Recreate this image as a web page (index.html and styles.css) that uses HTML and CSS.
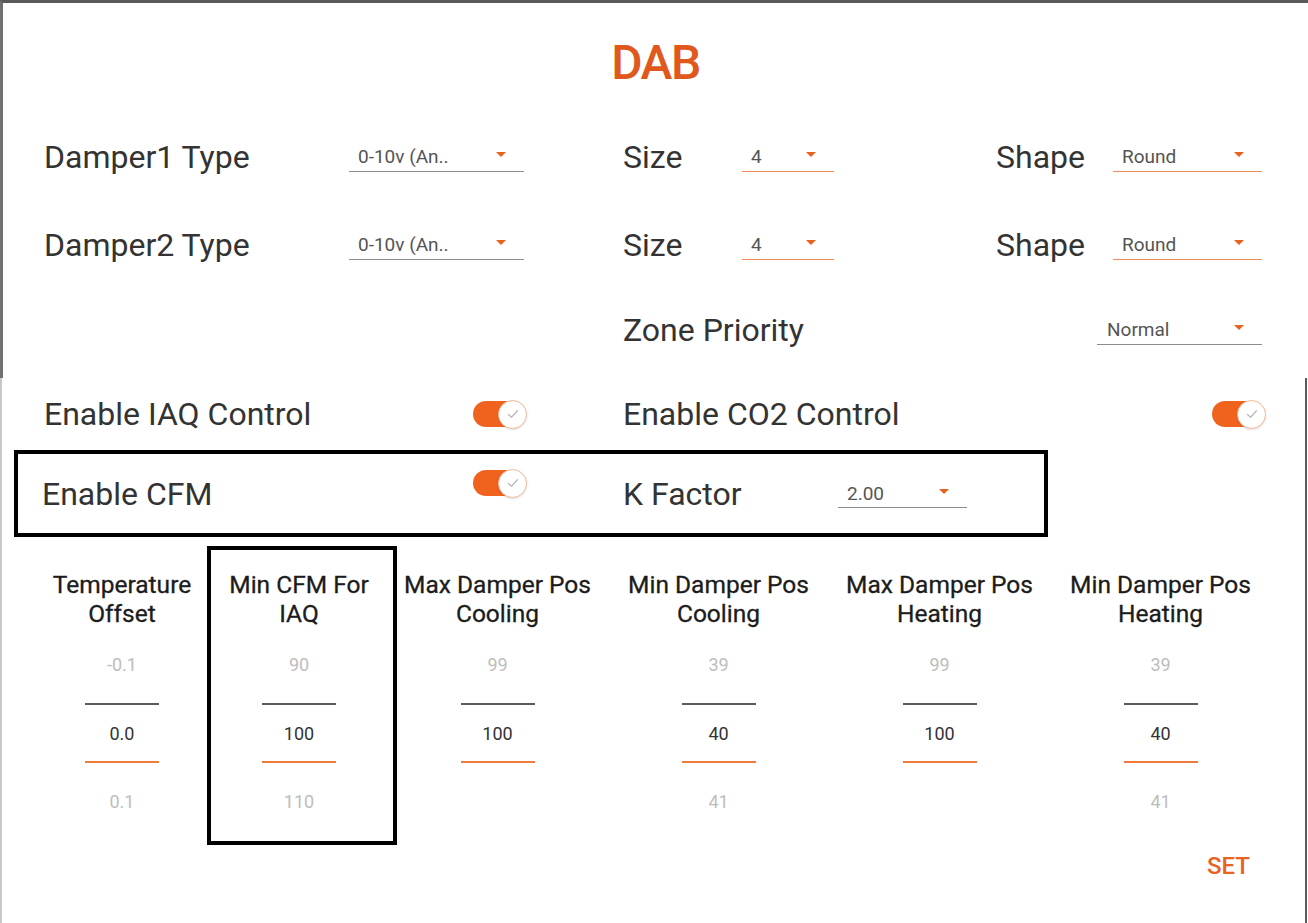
FILE: index.html
```html
<!DOCTYPE html>
<html>
<head>
<meta charset="utf-8">
<link rel="stylesheet" href="styles.css">
</head>
<body>
<div class="screen">
  <div class="top">
    <h1 class="title">DAB</h1>
    <div class="row">
      <div class="g1">
        <span class="lbl w305">Damper1 Type</span>
        <div class="dd w175"><span>0-10v (An..</span><i class="caret"></i></div>
      </div>
      <div class="g2">
        <span class="lbl w119">Size</span>
        <div class="dd orange w92"><span>4</span><i class="caret"></i></div>
      </div>
      <div class="g3">
        <span class="lbl w117">Shape</span>
        <div class="dd orange w149"><span>Round</span><i class="caret"></i></div>
      </div>
    </div>
    <div class="row">
      <div class="g1">
        <span class="lbl w305">Damper2 Type</span>
        <div class="dd w175"><span>0-10v (An..</span><i class="caret"></i></div>
      </div>
      <div class="g2">
        <span class="lbl w119">Size</span>
        <div class="dd orange w92"><span>4</span><i class="caret"></i></div>
      </div>
      <div class="g3">
        <span class="lbl w117">Shape</span>
        <div class="dd orange w149"><span>Round</span><i class="caret"></i></div>
      </div>
    </div>
    <div class="row short">
      <div class="g1"></div>
      <div class="g23">
        <span class="lbl">Zone Priority</span>
        <div class="dd w165 pl10"><span>Normal</span><i class="caret"></i></div>
      </div>
    </div>
  </div>

  <div class="bottom">
    <div class="trow">
      <div class="g1">
        <span class="lbl w429">Enable IAQ Control</span>
        <div class="toggle"><span class="track"></span><span class="thumb"><svg viewBox="0 0 16 16" width="16" height="16"><path d="M3.5 8.5 L6.5 11.2 L12.5 4.8" fill="none" stroke="#b8b8b8" stroke-width="1.3" stroke-linecap="round" stroke-linejoin="round"/></svg></span></div>
      </div>
      <div class="g2wide">
        <span class="lbl">Enable CO2 Control</span>
        <div class="toggle"><span class="track"></span><span class="thumb"><svg viewBox="0 0 16 16" width="16" height="16"><path d="M3.5 8.5 L6.5 11.2 L12.5 4.8" fill="none" stroke="#b8b8b8" stroke-width="1.3" stroke-linecap="round" stroke-linejoin="round"/></svg></span></div>
      </div>
    </div>

    <div class="cfm-box">
      <div class="cg1">
        <span class="lbl w431">Enable CFM</span>
        <div class="toggle raised"><span class="track"></span><span class="thumb"><svg viewBox="0 0 16 16" width="16" height="16"><path d="M3.5 8.5 L6.5 11.2 L12.5 4.8" fill="none" stroke="#b8b8b8" stroke-width="1.3" stroke-linecap="round" stroke-linejoin="round"/></svg></span></div>
      </div>
      <div class="cg2">
        <span class="lbl w215">K Factor</span>
        <div class="dd w129"><span>2.00</span><i class="caret"></i></div>
      </div>
    </div>

    <div class="pickers">
      <div class="col c1">
        <div class="head">Temperature<br>Offset</div>
        <div class="v prev">-0.1</div>
        <div class="sep"></div>
        <div class="v cur">0.0</div>
        <div class="sep or"></div>
        <div class="v next">0.1</div>
      </div>
      <div class="col c2">
        <div class="mark"></div>
        <div class="head">Min CFM For<br>IAQ</div>
        <div class="v prev">90</div>
        <div class="sep"></div>
        <div class="v cur">100</div>
        <div class="sep or"></div>
        <div class="v next">110</div>
      </div>
      <div class="col">
        <div class="head">Max Damper Pos<br>Cooling</div>
        <div class="v prev">99</div>
        <div class="sep"></div>
        <div class="v cur">100</div>
        <div class="sep or"></div>
        <div class="v next"></div>
      </div>
      <div class="col">
        <div class="head">Min Damper Pos<br>Cooling</div>
        <div class="v prev">39</div>
        <div class="sep"></div>
        <div class="v cur">40</div>
        <div class="sep or"></div>
        <div class="v next">41</div>
      </div>
      <div class="col">
        <div class="head">Max Damper Pos<br>Heating</div>
        <div class="v prev">99</div>
        <div class="sep"></div>
        <div class="v cur">100</div>
        <div class="sep or"></div>
        <div class="v next"></div>
      </div>
      <div class="col">
        <div class="head">Min Damper Pos<br>Heating</div>
        <div class="v prev">39</div>
        <div class="sep"></div>
        <div class="v cur">40</div>
        <div class="sep or"></div>
        <div class="v next">41</div>
      </div>
    </div>

    <div class="actions"><span class="set">SET</span></div>
  </div>
</div>
</body>
</html>
```

FILE: styles.css
```css
html, body {
  margin: 0;
  padding: 0;
  background: #fff;
}

.screen {
  width: 1308px;
  height: 923px;
  overflow: hidden;
  background: #fff;
  font-family: Roboto, "Noto Sans", "Liberation Sans", sans-serif;
  color: #2e2e2e;
}

/* ---------- top panel ---------- */
.top {
  height: 378px;
  box-sizing: border-box;
  border-top: 3px solid #5a5a5a;
  border-left: 3px solid #707070;
}

.title {
  margin: 0;
  height: 110px;
  padding-top: 10px;
  box-sizing: border-box;
  text-align: center;
  font-size: 48px;
  font-weight: 500;
  line-height: 100px;
  color: #e0581c;
  letter-spacing: -1.5px;
}

.row {
  display: flex;
  align-items: center;
  height: 88px;
  padding-left: 41px;
  padding-right: 46px;
}

.row.short {
  height: 82px;
}

.g1 {
  width: 579px;
  display: flex;
  align-items: center;
  flex: none;
}

.g2 {
  width: 373px;
  display: flex;
  align-items: center;
  flex: none;
}

.g3 {
  display: flex;
  align-items: center;
  flex: none;
}

.g23 {
  flex: 1;
  display: flex;
  align-items: center;
  justify-content: space-between;
}

.lbl {
  font-size: 32px;
  color: #333;
  white-space: nowrap;
  flex: none;
}

.w305 { width: 305px; }
.w119 { width: 119px; }
.w117 { width: 117px; }
.w429 { width: 429px; }
.w431 { width: 431px; }
.w215 { width: 215px; }

/* ---------- dropdowns ---------- */
.dd {
  display: flex;
  align-items: center;
  justify-content: space-between;
  height: 29px;
  box-sizing: border-box;
  border-bottom: 1.5px solid #8c8c8c;
  padding: 0 18px 0 9px;
  font-size: 19px;
  color: #555;
  flex: none;
}

.dd.orange {
  border-bottom-color: #f08a54;
}

.dd.pl10 {
  padding-left: 10px;
}

.w175 { width: 175px; }
.w92 { width: 92px; }
.w149 { width: 149px; }
.w165 { width: 165px; }
.w129 { width: 129px; }

.caret {
  display: block;
  width: 0;
  height: 0;
  border-left: 5px solid transparent;
  border-right: 5px solid transparent;
  border-top: 5px solid #e8621f;
  margin-bottom: 4px;
}

/* ---------- bottom panel ---------- */
.bottom {
  height: 545px;
  width: 1307px;
  box-sizing: border-box;
  border-left: 2px solid #c8c8c8;
  border-right: 2px solid #5a5a5a;
}

.trow {
  display: flex;
  align-items: center;
  height: 72px;
  padding-left: 42px;
}

.g2wide {
  width: 643px;
  display: flex;
  align-items: center;
  justify-content: space-between;
  flex: none;
}

/* toggle */
.toggle {
  width: 54px;
  height: 30px;
  display: flex;
  align-items: center;
  flex: none;
}

.toggle.raised {
  align-self: flex-start;
  margin-top: 14px;
}

.track {
  width: 48px;
  height: 26px;
  border-radius: 13px;
  background: #f0631e;
  flex: none;
}

.thumb {
  width: 29px;
  height: 29px;
  margin-left: -23px;
  border-radius: 50%;
  background: #fff;
  border: 1.5px solid #f7b896;
  box-sizing: border-box;
  display: flex;
  align-items: center;
  justify-content: center;
  flex: none;
  box-shadow: 0 1px 2px rgba(0,0,0,0.12);
}

/* CFM highlighted row */
.cfm-box {
  margin-left: 12px;
  width: 1034px;
  height: 87px;
  box-sizing: border-box;
  border: 4px solid #000;
  display: flex;
  align-items: center;
  padding-left: 24px;
}

.cg1 {
  width: 581px;
  height: 100%;
  display: flex;
  align-items: center;
  flex: none;
}

.cg2 {
  display: flex;
  align-items: center;
  flex: none;
}

/* ---------- pickers ---------- */
.pickers {
  display: flex;
  padding-left: 31px;
  padding-top: 33px;
}

.col {
  width: 221px;
  flex: none;
  display: flex;
  flex-direction: column;
  align-items: center;
  position: relative;
}

.col.c1 { width: 178px; }
.col.c2 { width: 176px; }

.mark {
  position: absolute;
  left: -4px;
  right: -10px;
  top: -24px;
  height: 299px;
  box-sizing: border-box;
  border: 4px solid #000;
}

.head {
  font-size: 24.5px;
  font-weight: 400;
  line-height: 29px;
  height: 58px;
  text-align: center;
  color: #1c1c1c;
  white-space: nowrap;
  -webkit-text-stroke: 0.3px #1c1c1c;
}

.v {
  font-size: 18px;
  height: 28px;
  line-height: 28px;
  color: #bdbdbd;
}

.v.prev { margin-top: 23px; }
.v.cur { margin-top: 15px; color: #333; }
.v.next { margin-top: 25px; }

.sep {
  width: 74px;
  height: 2px;
  background: #5c5c5c;
  margin-top: 24px;
}

.sep.or {
  background: #f07a3a;
  margin-top: 13px;
}

.actions {
  display: flex;
  justify-content: flex-end;
  padding-right: 55px;
  margin-top: 35px;
}

.set {
  font-size: 24px;
  font-weight: 500;
  line-height: 30px;
  color: #e8631f;
}
```
